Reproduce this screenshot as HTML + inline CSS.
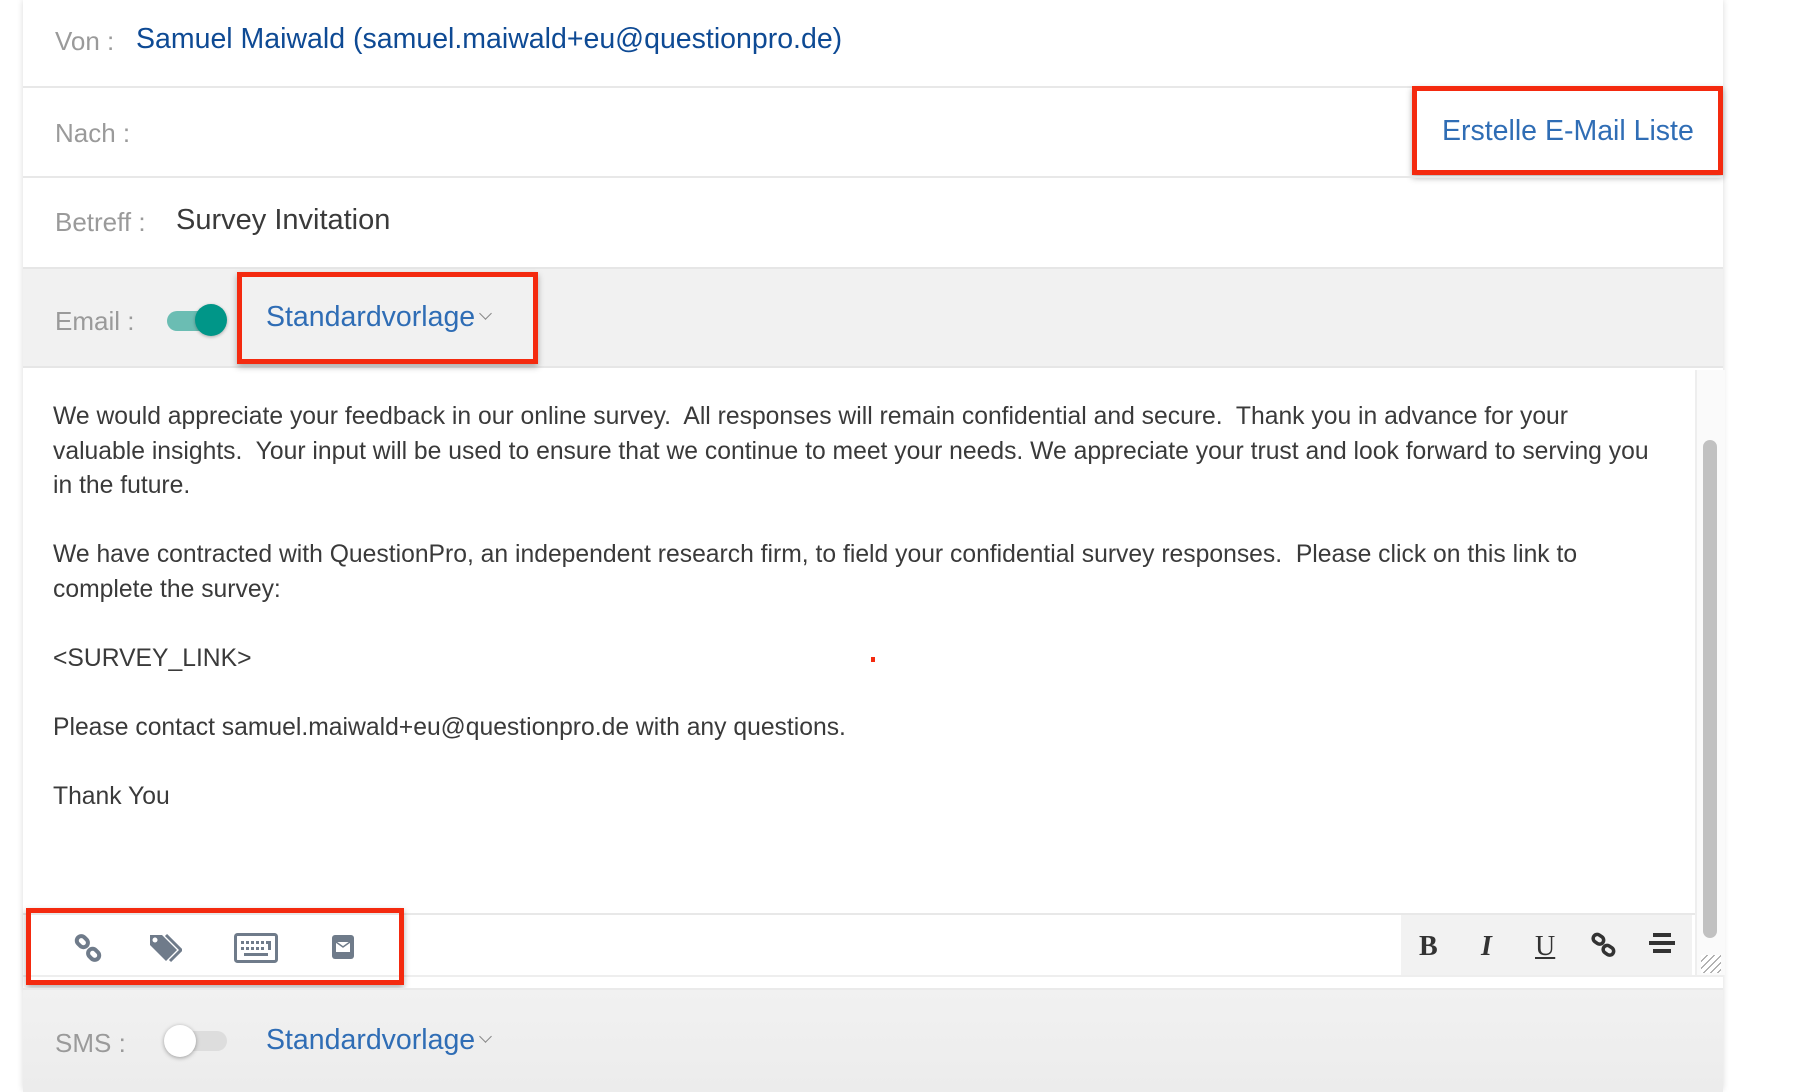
<!DOCTYPE html>
<html><head><meta charset="utf-8"><style>
body{margin:0;width:1804px;height:1090px;background:#fff;font-family:"Liberation Sans",sans-serif;position:relative;overflow:hidden}
.panel{position:absolute;left:23px;width:1700px;background:#fff}
.abs{position:absolute}
.lbl{color:#9a9a9a;font-size:26px}
.hr{position:absolute;left:23px;width:1700px;height:2px;background:#e8e8e8}
.red{position:absolute;border:5px solid #f42a0f;box-sizing:border-box;box-shadow:0 3px 6px rgba(0,0,0,.3)}
.body{position:absolute;left:53px;top:400px;font-size:24.7px;color:#3a3a3a;line-height:34.5px;white-space:nowrap}
.chev{display:inline-block;width:8px;height:8px;border-right:1.5px solid #888;border-bottom:1.5px solid #888;transform:rotate(45deg);vertical-align:8px;margin-left:6px}
</style></head><body>
<div class="panel" style="top:0;height:1090px;box-shadow:0 0 6px rgba(0,0,0,.15)"></div>
<div class="abs lbl" style="left:55px;top:26px">Von :</div>
<div class="abs" style="left:136px;top:23px;font-size:28.5px;color:#0e4a94">Samuel Maiwald (samuel.maiwald+eu@questionpro.de)</div>
<div class="hr" style="top:86px"></div>
<div class="abs lbl" style="left:55px;top:118px">Nach :</div>
<div class="abs" style="left:1442px;top:115px;font-size:28.5px;color:#2f6db5">Erstelle E-Mail Liste</div>
<div class="red" style="left:1412px;top:86px;width:311px;height:89px"></div>
<div class="hr" style="top:176px"></div>
<div class="abs lbl" style="left:55px;top:207px">Betreff :</div>
<div class="abs" style="left:176px;top:204px;font-size:29px;color:#3a3a3a">Survey Invitation</div>
<div class="abs" style="left:23px;top:267px;width:1700px;height:101px;background:#f1f1f1;border-top:2px solid #e6e6e6;border-bottom:2px solid #e6e6e6;box-sizing:border-box"></div>
<div class="abs lbl" style="left:55px;top:306px">Email :</div>
<div class="abs" style="left:167px;top:311px;width:56px;height:20px;border-radius:10px;background:#6bbdb3"></div>
<div class="abs" style="left:195px;top:304px;width:32px;height:32px;border-radius:50%;background:#009688;box-shadow:0 1px 3px rgba(0,0,0,.3)"></div>
<div class="abs" style="left:266px;top:301px;font-size:28.5px;color:#2f6db5">Standardvorlage<span class="chev"></span></div>
<div class="red" style="left:237px;top:272px;width:301px;height:92px"></div>
<div class="body">We would appreciate your feedback in our online survey.&nbsp; All responses will remain confidential and secure.&nbsp; Thank you in advance for your<br>valuable insights.&nbsp; Your input will be used to ensure that we continue to meet your needs. We appreciate your trust and look forward to serving you<br>in the future.<br><br>We have contracted with QuestionPro, an independent research firm, to field your confidential survey responses.&nbsp; Please click on this link to<br>complete the survey:<br><br>&lt;SURVEY_LINK&gt;<br><br>Please contact samuel.maiwald+eu@questionpro.de with any questions.<br><br>Thank You</div>
<div class="abs" style="left:871px;top:657px;width:4px;height:5px;background:#f42a0f"></div>
<div class="abs" style="left:1695px;top:370px;width:28px;height:605px;background:#fafafa;border-left:2px solid #eee"></div>
<div class="abs" style="left:1703px;top:440px;width:14px;height:498px;background:#c1c1c1;border-radius:7px"></div>
<div class="abs" style="left:1701px;top:955px;width:20px;height:18px;background:repeating-linear-gradient(135deg,#fff 0 4px,#999 4px 5px)"></div>
<div class="hr" style="top:913px;width:1672px"></div>
<div class="abs" style="left:1401px;top:915px;width:291px;height:60px;background:#f2f2f2"></div>
<div class="abs" style="left:1419px;top:931px;font-family:'Liberation Serif',serif;font-size:28px;color:#333;font-weight:bold">B</div>
<div class="abs" style="left:1481px;top:931px;font-family:'Liberation Serif',serif;font-size:28px;color:#333;font-style:italic;font-weight:bold">I</div>
<div class="abs" style="left:1535px;top:931px;font-family:'Liberation Serif',serif;font-size:28px;color:#333;text-decoration:underline">U</div>
<svg class="abs" style="left:1591px;top:932px" width="26" height="26" viewBox="0 0 26 26" fill="none" stroke="#333" stroke-width="3.5"><rect x="2" y="3" width="11" height="8" rx="4" transform="rotate(35 7 7)"/><rect x="12" y="14" width="11" height="8" rx="4" transform="rotate(35 17 18)"/></svg>
<svg class="abs" style="left:1649px;top:933px" width="26" height="22"><rect x="4" y="0" width="18" height="4" fill="#333"/><rect x="0" y="8" width="26" height="4" fill="#333"/><rect x="4" y="16" width="18" height="4" fill="#333"/></svg>
<div class="abs" style="left:23px;top:975px;width:1700px;height:2px;background:#eee"></div>
<svg class="abs" style="left:74px;top:934px" width="30" height="30" viewBox="0 0 30 30" fill="none" stroke="#6f7b8a" stroke-width="4"><rect x="2" y="3" width="12" height="9" rx="4.5" transform="rotate(45 8 8)"/><rect x="14" y="16" width="12" height="9" rx="4.5" transform="rotate(45 20 20)"/></svg>
<svg class="abs" style="left:148px;top:933px" width="34" height="32" viewBox="0 0 34 32"><path d="M2 2h12l15 15-11 11L2 12z" fill="#6f7b8a"/><circle cx="7" cy="7" r="2.5" fill="#fff"/><path d="M18 2l15 15-11 11" fill="none" stroke="#6f7b8a" stroke-width="3"/></svg>
<svg class="abs" style="left:234px;top:933px" width="44" height="30" viewBox="0 0 44 30"><rect x="1.5" y="1.5" width="41" height="27" rx="2" fill="none" stroke="#6f7b8a" stroke-width="3"/><g fill="#6f7b8a"><rect x="7" y="8" width="3" height="3"/><rect x="12" y="8" width="3" height="3"/><rect x="17" y="8" width="3" height="3"/><rect x="22" y="8" width="3" height="3"/><rect x="27" y="8" width="3" height="3"/><rect x="32" y="8" width="5" height="3"/><rect x="7" y="14" width="3" height="3"/><rect x="12" y="14" width="3" height="3"/><rect x="17" y="14" width="3" height="3"/><rect x="22" y="14" width="3" height="3"/><rect x="27" y="14" width="3" height="3"/><rect x="34" y="11" width="3" height="6"/><rect x="10" y="20" width="24" height="3"/></g></svg>
<svg class="abs" style="left:332px;top:935px" width="22" height="24" viewBox="0 0 22 24"><rect x="0" y="0" width="22" height="24" rx="3" fill="#6f7b8a"/><rect x="4" y="7" width="14" height="10" fill="#fff"/><path d="M4 7l7 5 7-5" fill="none" stroke="#6f7b8a" stroke-width="1.5"/></svg>
<div class="red" style="left:26px;top:908px;width:378px;height:77px"></div>
<div class="abs" style="left:23px;top:988px;width:1700px;height:102px;background:linear-gradient(#f1f1f1,#ececec);border-top:2px solid #eaeaea"></div>
<div class="abs lbl" style="left:55px;top:1028px">SMS :</div>
<div class="abs" style="left:167px;top:1031px;width:60px;height:20px;border-radius:10px;background:#ddd"></div>
<div class="abs" style="left:164px;top:1025px;width:32px;height:32px;border-radius:50%;background:#fff;box-shadow:0 1px 4px rgba(0,0,0,.35)"></div>
<div class="abs" style="left:266px;top:1024px;font-size:28.5px;color:#2f6db5">Standardvorlage<span class="chev"></span></div>
</body></html>
